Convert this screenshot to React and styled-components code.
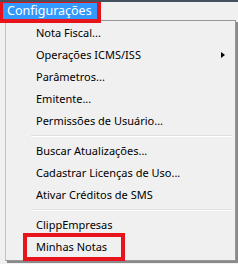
import React from 'react';
import styled, { createGlobalStyle } from 'styled-components';

const GlobalStyle = createGlobalStyle`
  html, body {
    margin: 0;
    padding: 0;
    background: #f0f0f0;
  }
  body {
    font-family: "Noto Sans", "Open Sans", sans-serif;
    font-size: 11px;
    color: #000;
  }
`;

const items = [
    { label: 'Nota Fiscal...' },
    { label: 'Operações ICMS/ISS', submenu: true },
    { label: 'Parâmetros...' },
    { label: 'Emitente...' },
    { label: 'Permissões de Usuário...' },
    { separator: true },
    { label: 'Buscar Atualizações...' },
    { label: 'Cadastrar Licenças de Uso...' },
    { label: 'Ativar Créditos de SMS' },
    { separator: true },
    { label: 'ClippEmpresas' },
    { label: 'Minhas Notas', marked: true },
];

const App = () => {
    return (
        <Frame>
            <GlobalStyle />
            <MenuBar>
                <Tab>Configurações</Tab>
            </MenuBar>
            <Menu>
                {items.map((item, i) =>
                    item.separator ? (
                        <Separator key={i} />
                    ) : (
                        <Item key={i} marked={item.marked}>
                            <Label>{item.label}</Label>
                            {item.submenu && <Arrow />}
                        </Item>
                    )
                )}
            </Menu>
        </Frame>
    );
};

const Frame = styled.div`
width: 238px;
height: 264px;
overflow: hidden;
background: #f0f0f0;
border-top: 2px solid #44505d;
box-sizing: border-box;
`;

const MenuBar = styled.div`
display: flex;
height: 18px;
`;

const Tab = styled.div`
position: relative;
z-index: 2;
margin-top: -2px;
width: 90px;
height: 16px;
padding-left: 4px;
line-height: 15px;
font-size: 12.5px;
color: #fff;
background: #3399ff;
border: 3px solid #e8141c;
border-right-width: 4px;
border-bottom-width: 4px;
white-space: nowrap;
overflow: hidden;
`;

const Menu = styled.div`
margin-left: 5px;
width: 231px;
box-sizing: border-box;
padding: 1px 0 2px;
background: #f0f0f0;
border: 1px solid #979797;
border-left-color: #c4c4c4;
box-shadow: 2px 2px 0 #8a8a8a;
`;

const Item = styled.div`
position: relative;
display: flex;
align-items: center;
height: 22px;
padding-left: 30px;
padding-right: 10px;
&::after {
  content: '';
  display: ${props => props.marked ? 'block' : 'none'};
  position: absolute;
  left: 17px;
  top: -3px;
  width: 102px;
  height: 28px;
  box-sizing: border-box;
  border: 4px solid #e8141c;
}
`;

const Label = styled.span`
flex: 1;
line-height: 22px;
white-space: nowrap;
`;

const Arrow = styled.span`
width: 0;
height: 0;
border-top: 3.5px solid transparent;
border-bottom: 3.5px solid transparent;
border-left: 4px solid #000;
`;

const Separator = styled.div`
height: 8px;
margin: 0 3px 0 25px;
display: flex;
align-items: center;
&::before {
  content: '';
  flex: 1;
  height: 1px;
  background: #e0e0e0;
  border-bottom: 1px solid #fff;
}
`;

export default App;
